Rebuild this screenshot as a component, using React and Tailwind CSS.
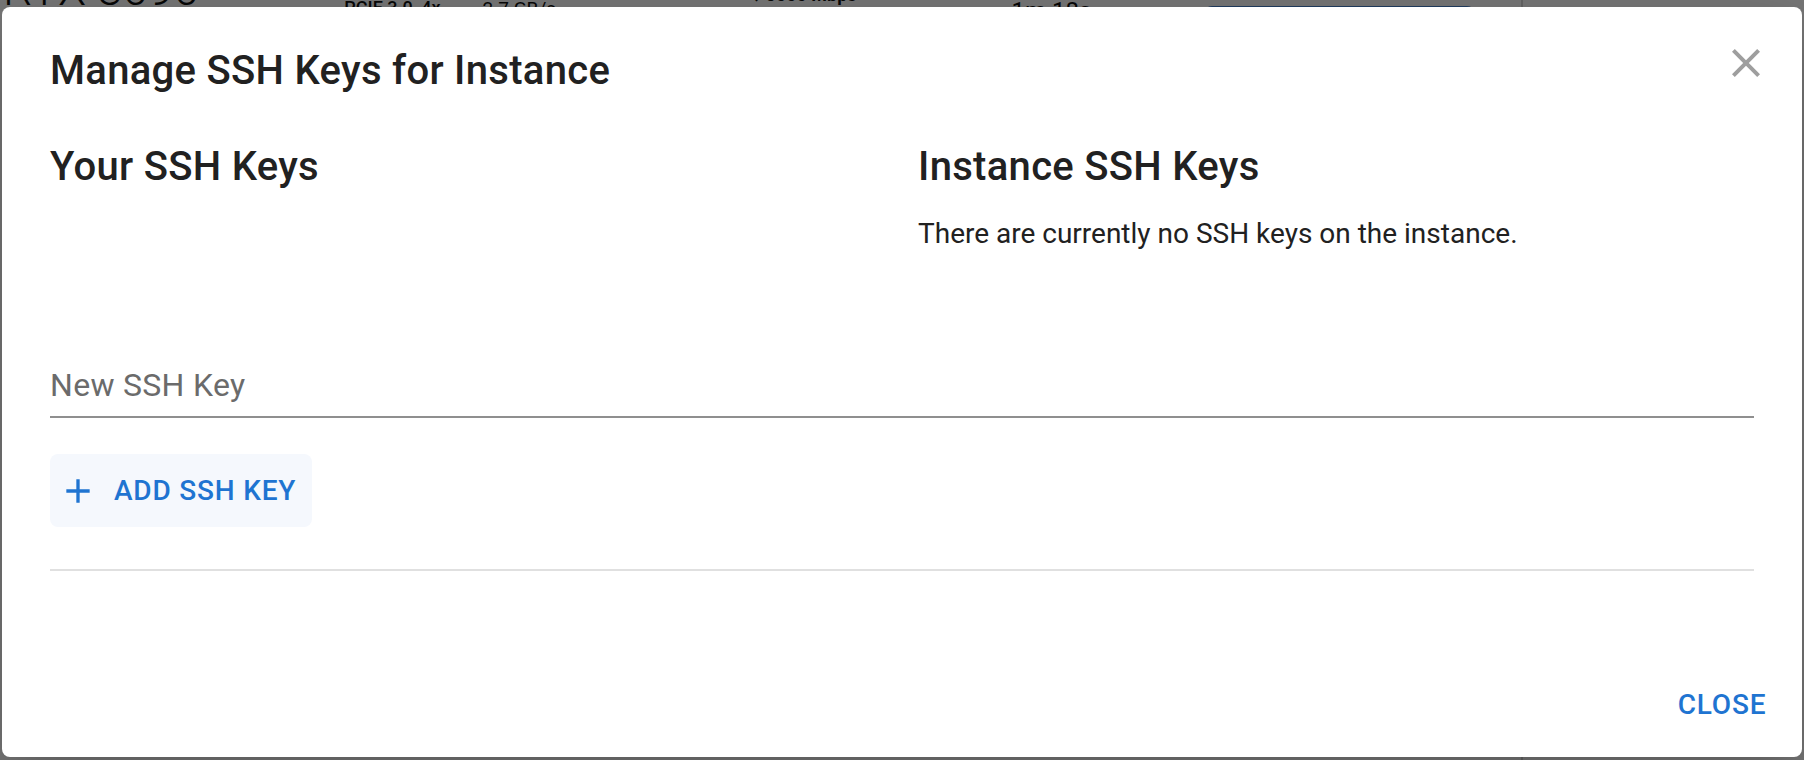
export default function App() {
  return (
    <div className="relative w-[1804px] h-[760px] overflow-hidden bg-white font-['Roboto','Liberation_Sans',sans-serif]">
      {/* Page behind the modal (only a sliver is visible) */}
      <div className="flex items-start h-[760px] text-[#111]">
        <span className="ml-[3px] -mt-[34px] text-[46px] leading-none font-light whitespace-nowrap">RTX 3090</span>
        <span className="ml-[145px] -mt-[1px] text-[18px] leading-none font-medium whitespace-nowrap">PCIE 3.0, 4x</span>
        <span className="ml-[42px] -mt-[1px] text-[19px] leading-none whitespace-nowrap">2.7 GB/s</span>
        <span className="ml-[196px] -mt-[14px] text-[18px] leading-none font-bold whitespace-nowrap">↓ 5000 Mbps</span>
        <span className="ml-[155px] -mt-[1px] text-[24px] leading-none whitespace-nowrap">1m 18s</span>
        <div className="ml-[113px] mt-[6px] w-[271px] h-[40px] rounded-[8px] bg-[#4a84d0]" />
        <div className="ml-[46px] w-[2px] h-[760px] bg-[#d6d6d6]" />
      </div>

      {/* Backdrop */}
      <div className="absolute inset-0 bg-black/[0.535]" />

      {/* Dialog */}
      <div className="absolute left-[2px] top-[7px] w-[1800px] h-[750px] bg-white rounded-[8px] flex flex-col shadow-[0_22px_70px_rgba(0,0,0,0.25)]">
        <h2 className="px-[48px] pt-[32px] pb-[32px] text-[40px] leading-[64px] font-medium text-[#212121] tracking-[0.3px]">
          Manage SSH Keys for Instance
        </h2>
        <button className="absolute right-[16px] top-[16px] w-[80px] h-[80px] rounded-full flex items-center justify-center">
          <svg viewBox="0 0 24 24" className="w-[48px] h-[48px] fill-[#9e9e9e]">
            <path d="M19 6.41 17.59 5 12 10.59 6.41 5 5 6.41 10.59 12 5 17.59 6.41 19 12 13.41 17.59 19 19 17.59 13.41 12z" />
          </svg>
        </button>

        <div className="px-[48px]">
          <div className="grid grid-cols-2 gap-x-[32px]">
            <div>
              <h3 className="text-[40px] leading-[64px] font-medium text-[#212121] tracking-[0.3px]">Your SSH Keys</h3>
            </div>
            <div>
              <h3 className="text-[40px] leading-[64px] font-medium text-[#212121] tracking-[0.3px]">Instance SSH Keys</h3>
              <p className="mt-[15px] text-[28px] leading-[40px] text-[#212121]">
                There are currently no SSH keys on the instance.
              </p>
            </div>
          </div>

          <div className="mt-[108px] border-b-2 border-[#8f8f8f] pb-[8px]">
            <div className="text-[32px] leading-[46px] text-[#6b6b6b] tracking-[0.3px]">New SSH Key</div>
          </div>

          <button className="mt-[36px] h-[73px] pl-[16px] pr-[16px] rounded-[8px] bg-[#f5f8fd] flex items-center text-[#1f74d1]">
            <svg viewBox="0 0 24 24" className="-ml-[8px] mr-[16px] w-[40px] h-[40px] fill-[#1f74d1]">
              <path d="M19 13h-6v6h-2v-6H5v-2h6V5h2v6h6z" />
            </svg>
            <span className="text-[28px] leading-[49px] font-medium tracking-[0.8px]">ADD SSH KEY</span>
          </button>

          <div className="mt-[42px] h-[2px] bg-[#e0e0e0]" />
        </div>

        <div className="mt-auto flex justify-end p-[16px]">
          <button className="min-w-[128px] h-[73px] px-[16px] rounded-[8px] text-[28px] leading-[49px] font-medium tracking-[0.8px] text-[#1f74d1]">
            CLOSE
          </button>
        </div>
      </div>
    </div>
  )
}
